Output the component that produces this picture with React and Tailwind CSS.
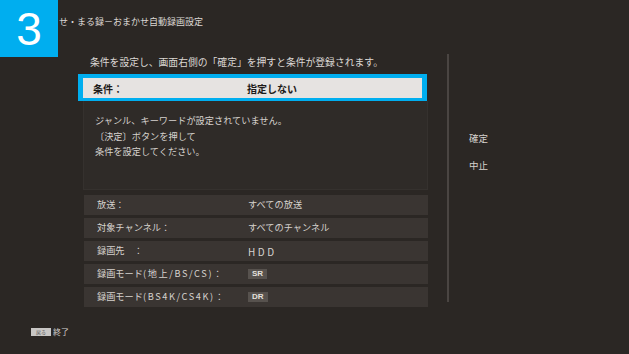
export default function App() {
  const rows = [
    { label: "放送：", value: "すべての放送" },
    { label: "対象チャンネル：", value: "すべてのチャンネル" },
    { label: "録画先　：", value: "HDD", wide: true },
    { label: "録画モード", ascii: "(地上/BS/CS)：", badge: "SR" },
    { label: "録画モード", ascii: "(BS4K/CS4K)：", badge: "DR" },
  ];
  return (
    <div
      className="relative w-[629px] h-[354px] overflow-hidden bg-[#2b2724] text-[#d6d2ce]"
      style={{ fontFamily: '"Noto Sans CJK JP", "Noto Sans", sans-serif' }}
    >
      <div className="absolute left-0 top-0 w-[58px] h-[57px] bg-[#00aeef] flex items-center justify-center">
        <span className="text-white text-[46px] leading-none" style={{ fontFamily: '"Liberation Sans", sans-serif' }}>3</span>
      </div>
      <div className="h-[45px] pl-[59px] pt-[15px] text-[9px] leading-[14px] text-[#dcd8d4]">
        せ・まる録－おまかせ自動録画設定
      </div>
      <div className="flex">
        <div className="ml-[78px] w-[350px] flex flex-col">
          <div className="h-[19px] pl-[12px] pt-[10px] text-[9.8px] leading-[14px] text-[#dcd8d4]">
            条件を設定し、画面右側の「確定」を押すと条件が登録されます。
          </div>
          <div className="mt-[10px] w-[349px] h-[27px] border-x-[5px] border-t-[4px] border-b-[3px] border-[#00aeef] bg-[#e6e3e1] flex items-center text-[10px] text-[#1e1b19] font-semibold">
            <span className="pl-[10px] w-[164px]">条件：</span>
            <span>指定しない</span>
          </div>
          <div className="ml-[5px] h-[89px] bg-[#2f2b28] border-x border-b border-[#35312e] pl-[11px] pt-[12px] text-[9.2px] leading-[15.5px] text-[#d6d2ce]">
            <div>ジャンル、キーワードが設定されていません。</div>
            <div>〔決定〕ボタンを押して</div>
            <div>条件を設定してください。</div>
          </div>
          <div className="ml-[6px] mt-[5px] flex flex-col gap-[3px]">
            {rows.map((r, i) => (
              <div key={i} className="h-[20px] bg-[#3a3532] flex items-center text-[9.2px] text-[#d6d2ce]">
                <span className="pl-[13px] w-[164px] whitespace-nowrap">
                  {r.label}
                  {r.ascii && <span className="tracking-[1.6px]">{r.ascii}</span>}
                </span>
                {r.badge ? (
                  <span className="h-[10px] px-[4px] bg-[#57524e] text-[8px] leading-[10px] font-bold text-[#e4e0dc]" style={{ fontFamily: '"Liberation Sans", sans-serif' }}>
                    {r.badge}
                  </span>
                ) : (
                  <span className={r.wide ? "tracking-[2.5px] text-[10px]" : ""}>{r.value}</span>
                )}
              </div>
            ))}
          </div>
        </div>
        <div className="ml-[19px] mt-[9px] w-[2px] h-[248px] bg-[#4a4542]" />
        <div className="ml-[20px] pt-[76px] flex flex-col text-[9.5px] text-[#d6d2ce] leading-[14px]">
          <span className="mt-[10px]">確定</span>
          <span className="mt-[13px]">中止</span>
        </div>
      </div>
      <div className="absolute left-[31px] top-[327px] flex items-center">
        <span className="w-[20px] h-[8px] bg-[#c8c6c4] text-[5px] leading-[8px] text-[#555] text-center">戻る</span>
        <span className="ml-[2px] text-[8px] leading-[10px] text-[#d6d2ce]">終了</span>
      </div>
    </div>
  );
}
